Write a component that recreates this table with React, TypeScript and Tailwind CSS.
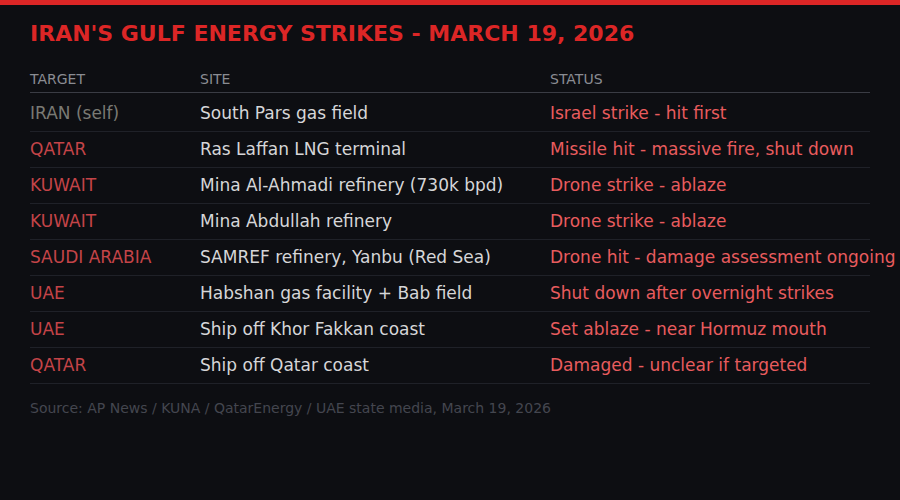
const rows = [
  { target: 'IRAN (self)', site: 'South Pars gas field', status: 'Israel strike - hit first', self: true },
  { target: 'QATAR', site: 'Ras Laffan LNG terminal', status: 'Missile hit - massive fire, shut down' },
  { target: 'KUWAIT', site: 'Mina Al-Ahmadi refinery (730k bpd)', status: 'Drone strike - ablaze' },
  { target: 'KUWAIT', site: 'Mina Abdullah refinery', status: 'Drone strike - ablaze' },
  { target: 'SAUDI ARABIA', site: 'SAMREF refinery, Yanbu (Red Sea)', status: 'Drone hit - damage assessment ongoing' },
  { target: 'UAE', site: 'Habshan gas facility + Bab field', status: 'Shut down after overnight strikes' },
  { target: 'UAE', site: 'Ship off Khor Fakkan coast', status: 'Set ablaze - near Hormuz mouth' },
  { target: 'QATAR', site: 'Ship off Qatar coast', status: 'Damaged - unclear if targeted' },
];

export default function App() {
  return (
    <div className="h-[500px] w-[900px] overflow-hidden bg-[#0d0e12] font-['DejaVu_Sans',sans-serif]">
      <div className="h-[5px] bg-[#dc2626]" />
      <div className="px-[30px] pt-[16px]">
        <h1 className="text-[22px] font-bold leading-[26px] text-[#dc2626]">
          IRAN'S GULF ENERGY STRIKES - MARCH 19, 2026
        </h1>
        <div className="mt-[24px] w-[840px]">
          <div className="mb-[3px] flex border-b border-[#3a3c44] pb-[4px] text-[14px] leading-[17px] text-[#8a8c92]">
            <div className="w-[170px] shrink-0">TARGET</div>
            <div className="w-[350px] shrink-0">SITE</div>
            <div>STATUS</div>
          </div>
          {rows.map((r, i) => (
            <div key={i} className="flex h-[36px] items-center whitespace-nowrap border-b border-[#1f2128] pt-[1px] text-[17px]">
              <div className={`w-[170px] shrink-0 ${r.self ? 'text-[#7a7a74]' : 'text-[#c44448]'}`}>{r.target}</div>
              <div className="w-[350px] shrink-0 text-[#d6d6d8]">{r.site}</div>
              <div className="text-[#e85c5e]">{r.status}</div>
            </div>
          ))}
        </div>
        <div className="mt-[16px] text-[14px] leading-[17px] text-[#44464f]">
          Source: AP News / KUNA / QatarEnergy / UAE state media, March 19, 2026
        </div>
      </div>
    </div>
  );
}
